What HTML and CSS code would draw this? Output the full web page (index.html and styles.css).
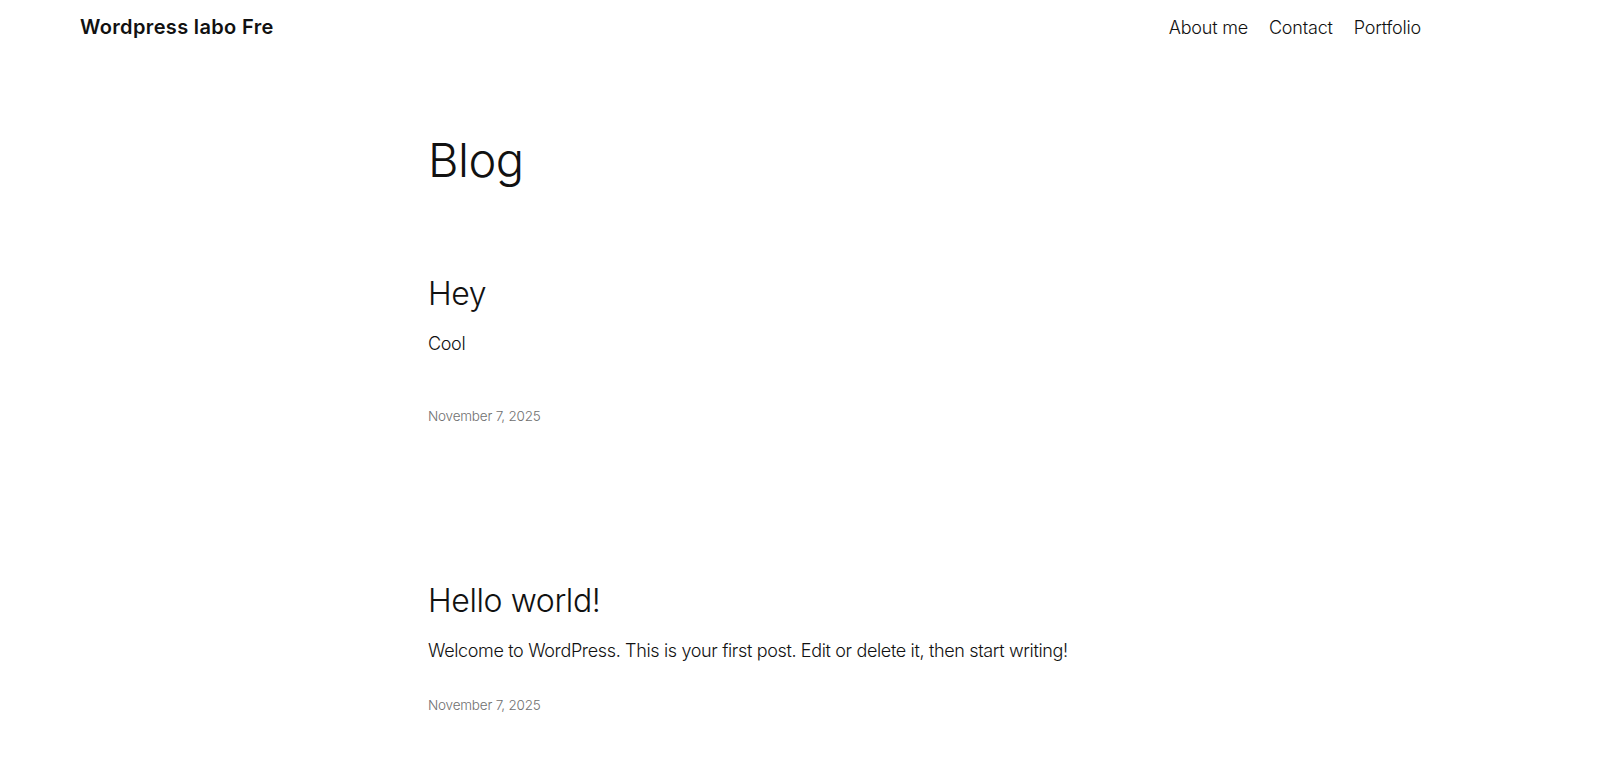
FILE: index.html
```html
<!DOCTYPE html>
<html lang="en">
<head>
<meta charset="utf-8">
<title>Blog – Wordpress labo Fre</title>
<link rel="stylesheet" href="styles.css">
</head>
<body>
<div class="site">
  <header class="site-header">
    <a class="site-title" href="#">Wordpress labo Fre</a>
    <nav class="site-nav">
      <a href="#">About me</a>
      <a href="#">Contact</a>
      <a href="#">Portfolio</a>
    </nav>
  </header>
  <main class="content">
    <h1 class="page-title">Blog</h1>
    <ul class="post-list">
      <li class="post">
        <h2 class="post-title"><a href="#">Hey</a></h2>
        <div class="post-excerpt post-excerpt--tall"><p>Cool</p></div>
        <div class="post-date">November 7, 2025</div>
      </li>
      <li class="post post--next">
        <h2 class="post-title"><a href="#">Hello world!</a></h2>
        <div class="post-excerpt"><p>Welcome to WordPress. This is your first post. Edit or delete it, then start writing!</p></div>
        <div class="post-date post-date--last">November 7, 2025</div>
      </li>
    </ul>
  </main>
</div>
</body>
</html>
```
FILE: styles.css
```css
html, body {
  margin: 0;
  padding: 0;
  background: #ffffff;
}
body {
  font-family: Inter, "Noto Sans", "Liberation Sans", sans-serif;
  color: #111111;
  font-weight: 300;
}
a {
  color: inherit;
  text-decoration: none;
}
.site {
  width: 1501px;
}
.site-header {
  display: flex;
  justify-content: space-between;
  align-items: center;
  padding: 14px 80px 0 80px;
}
.site-title {
  font-size: 20px;
  line-height: 26px;
  font-weight: 600;
  letter-spacing: 0.35px;
}
.site-nav {
  display: flex;
  gap: 21px;
  font-size: 18px;
  line-height: 25px;
  font-weight: 300;
  letter-spacing: -0.2px;
}
.content {
  width: 645px;
  margin: 0 auto;
}
.page-title {
  margin: 92px 0 0 0;
  font-size: 47px;
  line-height: 1.2;
  font-weight: 300;
  letter-spacing: -0.5px;
}
.post-list {
  list-style: none;
  margin: 87px 0 0 0;
  padding: 0;
}
.post--next {
  margin-top: 157px;
}
.post-title {
  margin: 0;
  font-size: 32px;
  line-height: 1.2;
  font-weight: 300;
  letter-spacing: -0.4px;
}
.post-excerpt {
  margin-top: 16px;
  font-size: 18px;
  line-height: 1.6;
  letter-spacing: -0.35px;
  white-space: nowrap;
}
.post-excerpt p {
  margin: 0;
}
.post-excerpt--tall {
  padding-bottom: 20px;
}
.post-date {
  margin-top: 28px;
  font-size: 13.5px;
  line-height: 1.4;
  letter-spacing: -0.2px;
  color: #707070;
}
.post-date--last {
  margin-top: 30px;
}
```
